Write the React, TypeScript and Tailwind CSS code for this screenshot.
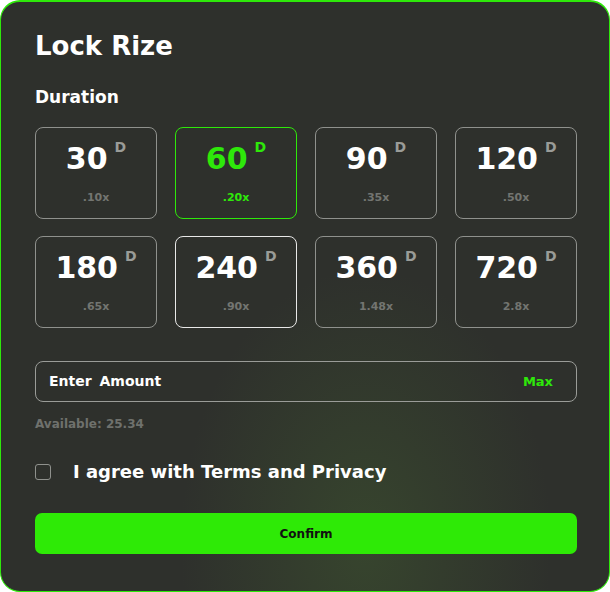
import React, { useState } from 'react';

type Option = { days: number; mult: string };

const options: Option[] = [
  { days: 30, mult: '.10x' },
  { days: 60, mult: '.20x' },
  { days: 90, mult: '.35x' },
  { days: 120, mult: '.50x' },
  { days: 180, mult: '.65x' },
  { days: 240, mult: '.90x' },
  { days: 360, mult: '1.48x' },
  { days: 720, mult: '2.8x' },
];

const font = { fontFamily: '"DejaVu Sans", "Liberation Sans", sans-serif' };

export default function App() {
  const [selected, setSelected] = useState(60);
  const [agree, setAgree] = useState(false);

  return (
    <div
      style={font}
      className="w-[610px] h-[592px] rounded-[20px] border border-t-2 border-[#2ee80a] bg-[#2e302c] bg-[radial-gradient(ellipse_at_60%_92%,rgba(68,100,48,0.4)_0%,rgba(46,48,44,0)_36%)] pl-[34px] pr-[32px] pt-[28px] text-white"
    >
      <h1 className="text-[26px] font-bold leading-[32px]">Lock Rize</h1>
      <h2 className="mt-[24px] text-[17px] font-bold leading-[22px]">Duration</h2>

      <div className="mt-[19px] grid grid-cols-4 gap-x-[18px] gap-y-[17px]">
        {options.map((o) => {
          const active = o.days === selected;
          const hovered = o.days === 240;
          return (
            <button
              key={o.days}
              onClick={() => setSelected(o.days)}
              className={`h-[92px] rounded-[8px] border flex flex-col items-center pt-[11px] ${
                active
                  ? 'border-[#2ee80a]'
                  : hovered
                  ? 'border-[#e8e8e8]'
                  : 'border-[#8f918d]'
              }`}
            >
              <div className="flex items-start">
                <span
                  className={`text-[30px] font-bold leading-[40px] ${
                    active ? 'text-[#2ee80a]' : 'text-white'
                  }`}
                >
                  {o.days}
                </span>
                <span
                  className={`ml-[7px] text-[14px] font-bold leading-[16px] ${
                    active ? 'text-[#2ee80a]' : 'text-[#9a9c98]'
                  }`}
                >
                  D
                </span>
              </div>
              <span
                className={`mt-[12px] text-[11px] font-bold leading-[14px] ${
                  active ? 'text-[#2ee80a]' : 'text-[#737571]'
                }`}
              >
                {o.mult}
              </span>
            </button>
          );
        })}
      </div>

      <div className="mt-[33px] h-[41px] rounded-[8px] border border-[#9a9c98] flex items-center justify-between pl-[13px] pr-[23px]">
        <span className="text-[14px] font-bold [word-spacing:3px]">Enter Amount</span>
        <span className="text-[13px] font-bold text-[#2ee80a]">Max</span>
      </div>

      <p className="mt-[14px] text-[12px] font-bold text-[#6f716d] leading-[16px]">
        Available: 25.34
      </p>

      <label className="mt-[28px] flex items-center cursor-pointer">
        <span
          onClick={() => setAgree(!agree)}
          className={`w-[16px] h-[16px] rounded-[3px] border border-[#8f918d] ${
            agree ? 'bg-[#2ee80a]' : ''
          }`}
        />
        <span className="ml-[22px] text-[18px] font-bold leading-[24px]">
          I agree with Terms and Privacy
        </span>
      </label>

      <button className="mt-[29px] w-full h-[41px] rounded-[7px] bg-[#2eea06] text-[12px] font-bold text-[#111]">
        Confirm
      </button>
    </div>
  );
}
